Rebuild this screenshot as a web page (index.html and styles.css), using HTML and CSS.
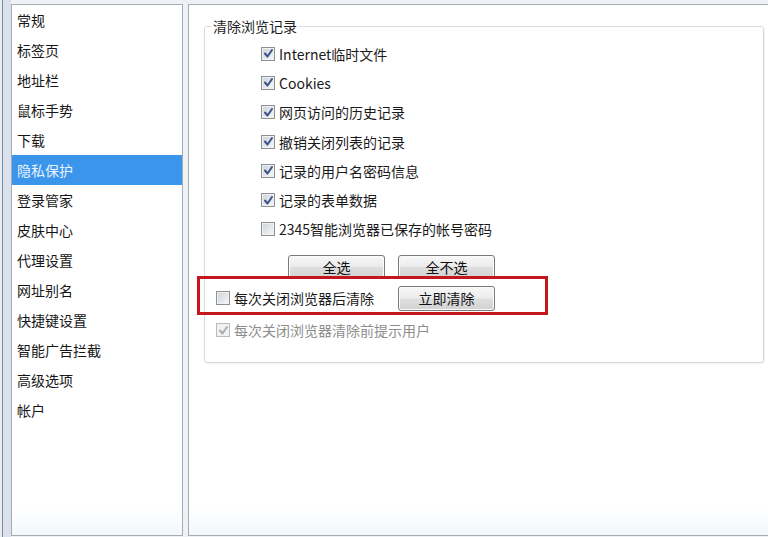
FILE: index.html
```html
<!DOCTYPE html>
<html lang="zh-CN">
<head>
<meta charset="utf-8">
<title>隐私保护</title>
<link rel="stylesheet" href="styles.css">
</head>
<body>
<div class="window">
  <div class="frame-edge"></div>
  <ul class="nav">
    <li>常规</li>
    <li>标签页</li>
    <li>地址栏</li>
    <li>鼠标手势</li>
    <li>下载</li>
    <li class="active">隐私保护</li>
    <li>登录管家</li>
    <li>皮肤中心</li>
    <li>代理设置</li>
    <li>网址别名</li>
    <li>快捷键设置</li>
    <li>智能广告拦截</li>
    <li>高级选项</li>
    <li>帐户</li>
  </ul>
  <div class="content">
    <fieldset class="group">
      <legend>清除浏览记录</legend>
      <div class="checks">
        <label class="check"><span class="box checked"><svg viewBox="0 0 11 11"><path d="M2 5.5 L4.5 8.5 L9 2"/></svg></span>Internet临时文件</label>
        <label class="check"><span class="box checked"><svg viewBox="0 0 11 11"><path d="M2 5.5 L4.5 8.5 L9 2"/></svg></span>Cookies</label>
        <label class="check"><span class="box checked"><svg viewBox="0 0 11 11"><path d="M2 5.5 L4.5 8.5 L9 2"/></svg></span>网页访问的历史记录</label>
        <label class="check"><span class="box checked"><svg viewBox="0 0 11 11"><path d="M2 5.5 L4.5 8.5 L9 2"/></svg></span>撤销关闭列表的记录</label>
        <label class="check"><span class="box checked"><svg viewBox="0 0 11 11"><path d="M2 5.5 L4.5 8.5 L9 2"/></svg></span>记录的用户名密码信息</label>
        <label class="check"><span class="box checked"><svg viewBox="0 0 11 11"><path d="M2 5.5 L4.5 8.5 L9 2"/></svg></span>记录的表单数据</label>
        <label class="check"><span class="box"></span>2345智能浏览器已保存的帐号密码</label>
      </div>
      <div class="buttons">
        <button class="btn">全选</button>
        <button class="btn">全不选</button>
      </div>
      <div class="auto-row">
        <label class="check auto-label"><span class="box"></span>每次关闭浏览器后清除</label>
        <button class="btn">立即清除</button>
      </div>
      <div class="prompt-row">
        <label class="check disabled"><span class="box checked"><svg viewBox="0 0 11 11"><path d="M2 5.5 L4.5 8.5 L9 2"/></svg></span>每次关闭浏览器清除前提示用户</label>
      </div>
    </fieldset>
  </div>
</div>
</body>
</html>
```

FILE: styles.css
```css
html, body {
  margin: 0;
  padding: 0;
  background: #ffffff;
  overflow: hidden;
}

body {
  font-family: "Noto Sans CJK SC", "Noto Sans", sans-serif;
  font-size: 14px;
  color: #1a1a1a;
}

.window {
  display: flex;
  width: 768px;
  height: 537px;
  background: #eef2f6;
}

.frame-edge {
  width: 11px;
  flex: none;
  background: linear-gradient(to right, #e9eef3 0 2px, #7d8894 2px 3px, #d9e2ec 3px 100%);
}

.nav {
  list-style: none;
  margin: 4px 0 0 0;
  padding: 0;
  width: 170px;
  height: 530px;
  flex: none;
  border: 1px solid #a6acb2;
  background: linear-gradient(to bottom, #ffffff 0, #ffffff 95%, #f3f8fc 100%);
}

.nav li {
  height: 30px;
  line-height: 30px;
  padding-left: 5px;
  color: #161616;
}

.nav li.active {
  background: #3b95ea;
  color: #e9f4ff;
}

.content {
  flex: 1;
  min-width: 0;
  margin: 4px 0 0 5px;
  height: 530px;
  border: 1px solid #a6acb2;
  border-right: none;
  background: linear-gradient(to bottom, #ffffff 0, #ffffff 95%, #f3f8fc 100%);
}

.group {
  position: relative;
  margin: 12px 0 0 15px;
  padding: 4px 0 18px 0;
  width: 558px;
  min-width: 0;
  border: 1px solid #d6dadd;
  border-radius: 3px;
  box-shadow: inset 1px 1px 0 #ffffff, 1px 1px 0 #f2f2f2;
}

.group legend {
  margin-left: 6px;
  padding: 0 2px;
  line-height: 18px;
  color: #1e1e1e;
}

.checks {
  padding-left: 56px;
}

.check {
  display: flex;
  align-items: center;
  height: 29.3px;
  line-height: 18px;
  color: #1a1a1a;
}

.box {
  width: 12px;
  height: 12px;
  flex: none;
  margin-right: 4px;
  border: 1px solid #8e9193;
  background: linear-gradient(135deg, #cfd2d5 0%, #e4e7ea 55%, #f7f8f9 100%);
  box-shadow: inset 0 0 0 1px #f0f1f2;
  display: flex;
  align-items: center;
  justify-content: center;
}

.box svg {
  width: 11px;
  height: 11px;
  fill: none;
  stroke: #3c518d;
  stroke-width: 2;
  stroke-linecap: round;
  stroke-linejoin: round;
}

.buttons {
  display: flex;
  gap: 13px;
  margin: 11px 0 0 83px;
}

.btn {
  width: 97px;
  height: 24px;
  padding: 0;
  border: 1px solid #7a7a7a;
  border-radius: 3px;
  background: linear-gradient(to bottom, #f7f7f7 0%, #ececec 48%, #dedede 52%, #d2d2d2 100%);
  box-shadow: inset 0 0 0 1px #fbfbfb;
  font-family: "Noto Sans CJK SC", "Noto Sans", sans-serif;
  font-size: 14px;
  line-height: 20px;
  color: #111111;
}

.auto-row {
  position: relative;
  display: flex;
  align-items: center;
  height: 28px;
  margin-top: 5px;
  padding-left: 11px;
}

.auto-row::before {
  content: "";
  position: absolute;
  left: -8px;
  top: -8px;
  bottom: -3px;
  width: 345px;
  border: 3px solid #c5161d;
  pointer-events: none;
}

.auto-label {
  width: 182px;
  height: 28px;
}

.auto-row .btn {
  height: 25px;
}

.prompt-row {
  margin-top: 4px;
  padding-left: 11px;
}

.prompt-row .check {
  height: 28px;
}

.check.disabled {
  color: #8d8d8d;
}

.check.disabled .box {
  border-color: #b9bbbd;
  background: #f1f2f3;
}

.check.disabled .box svg {
  stroke: #a9abad;
}
```
